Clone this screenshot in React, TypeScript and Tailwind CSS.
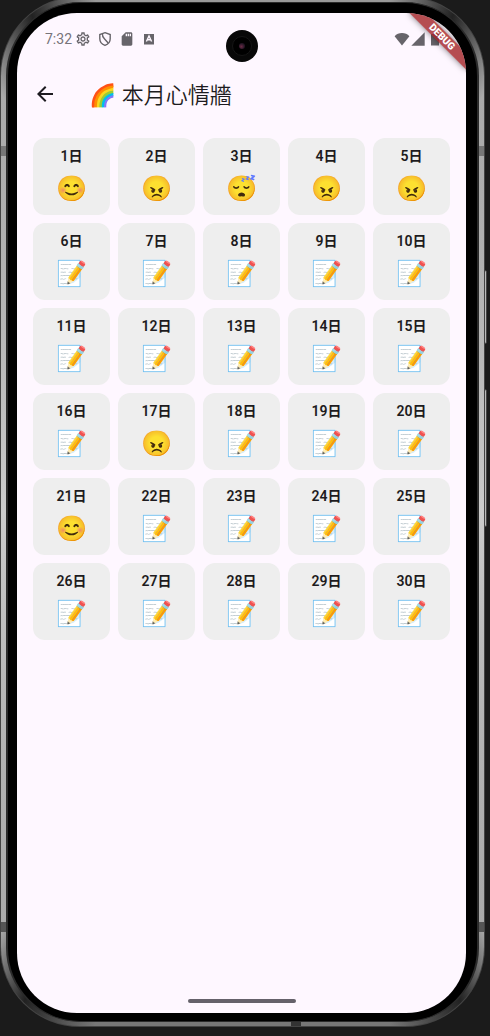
import React from "react";
import { MdArrowBack, MdOutlineSettings, MdSdCard, MdSignalCellular4Bar } from "react-icons/md";

const moods: Record<number, string> = {
  1: "😊",
  2: "😠",
  3: "😴",
  4: "😠",
  5: "😠",
  17: "😠",
  21: "😊",
};

const days = Array.from({ length: 30 }, (_, i) => i + 1);

function StatusBar() {
  return (
    <div className="relative flex h-[53px] items-center justify-between pr-[26px] pb-0.5 pl-7 text-[#67646a]">
      <div className="flex items-center">
        <span className="w-[30px] text-sm text-[#77747a]">7:32</span>
        <div className="flex items-center gap-1.5">
          <MdOutlineSettings className="size-4" />
          <svg viewBox="0 0 16 16" className="size-4" fill="none" stroke="currentColor" strokeWidth="1.4">
            <path d="M8 1.700 13.200 3.500v4.200c0 3.200-2.200 5.600-5.200 6.700-3-1.100-5.200-3.500-5.200-6.700V3.500z" />
            <path d="M5.400 2.800c-.2 2.400.4 3.700 2.200 5.300l3.600 3.800" />
          </svg>
          <MdSdCard className="size-4" />
          <svg viewBox="0 0 16 16" className="size-4">
            <path fill="currentColor" d="M3 3h10v10.500H3z" />
            <path d="M5.400 10.500 8 5l2.600 5.500M6.500 8.800h3" fill="none" stroke="#fef7ff" strokeWidth="1.400" />
          </svg>
        </div>
      </div>
      <div className="flex items-center">
        <svg viewBox="0 0 16 14" className="h-3.5 w-4" fill="currentColor">
          <path d="M8 13.500.600 4.200C2.500 2.200 5 1 8 1s5.500 1.200 7.400 3.200z" />
        </svg>
        <MdSignalCellular4Bar className="size-4" />
        <svg viewBox="0 0 10 14" className="ml-1 h-3.5 w-2.5" fill="currentColor">
          <path d="M1 2h2V.800h4V2h2v11.500H1z" />
        </svg>
      </div>
      <div className="absolute top-[17px] left-1/2 flex size-8 -translate-x-1/2 items-center justify-center rounded-full bg-[#080808]">
        <div className="flex size-5 items-center justify-center rounded-full border border-[#161616] bg-black">
          <div className="size-1.5 rounded-full bg-[radial-gradient(circle_at_40%_60%,#6b2b45,#251526_60%,#101010)]" />
        </div>
      </div>
    </div>
  );
}

export default function App() {
  return (
    <div className="relative flex min-h-screen flex-col overflow-hidden bg-[#1b1b1b] pr-[5px] pb-[9px] font-[Roboto,'Noto_Sans_CJK_TC','Noto_Color_Emoji',sans-serif]">
      <div className="absolute top-[270px] right-[3px] h-[74px] w-1 rounded-r-xs border border-[#444] bg-[#bbb]" />
      <div className="absolute top-[389px] right-[3px] h-[138px] w-1 rounded-r-xs border border-[#444] bg-[#bbb]" />
      <div className="relative -mt-1 flex flex-1 flex-col rounded-[80px] bg-[#444] p-px">
        <div className="relative flex flex-1 flex-col rounded-[79px] bg-[conic-gradient(from_0deg,#999_0deg,#999_16deg,#222_23deg,#aaa_30deg,#ccc_90deg,#aaa_150deg,#222_156deg,#777_164deg,#777_196deg,#222_204deg,#aaa_210deg,#ccc_270deg,#aaa_330deg,#222_337deg,#999_344deg,#999_360deg)] px-[5px] pt-[5px] pb-1">
          <div className="absolute top-[149px] left-0 h-2.5 w-1.5 bg-[#777]" />
          <div className="absolute top-[149px] right-0 h-2.5 w-1.5 bg-[#777]" />
          <div className="absolute bottom-[94px] left-0 h-2.5 w-1.5 bg-[#555]" />
          <div className="absolute right-0 bottom-[94px] h-2.5 w-1.5 bg-[#555]" />
          <div className="absolute right-[183px] bottom-0 h-1 w-2.5 bg-[#333]" />
          <div className="relative flex flex-1 flex-col rounded-[74px] border-x-2 border-y border-[#2b2b2b] bg-black pt-2.5 pr-[11px] pb-[8px] pl-[9px]">
            <main className="relative flex flex-1 flex-col overflow-hidden rounded-[60px] bg-[#fef7ff] text-[#1d1b20]">
              <StatusBar />
              <header className="flex h-14 items-center gap-8 pl-4">
                <button type="button" aria-label="返回" className="flex size-6 items-center justify-center">
                  <MdArrowBack className="size-6" />
                </button>
                <h1 className="pt-1 text-[22px] leading-7 font-[350]">🌈 本月心情牆</h1>
              </header>
              <ul className="grid grid-cols-5 gap-2 px-4 pt-4">
                {days.map((day) => (
                  <li key={day} className="flex aspect-square flex-col items-center gap-2 rounded-xl bg-[#eeeeee] pt-2">
                    <span className="text-sm leading-5 font-semibold">{day}日</span>
                    <span className="text-[25px] leading-[30px]">{moods[day] ?? "📝"}</span>
                  </li>
                ))}
              </ul>
              <div className="mx-auto mt-auto mb-2.5 h-1 w-[108px] rounded-full bg-[#65616a]" />
              <div className="absolute -top-10 -right-10 flex h-20 w-20 rotate-45 items-start justify-center">
                <div className="mt-[68px] h-3 w-20 shrink-0 bg-[#a32225]/80 text-center text-[10px] leading-3 font-black text-white shadow-[0_0_6px_rgba(0,0,0,0.5)]">
                  DEBUG
                </div>
              </div>
            </main>
          </div>
        </div>
      </div>
    </div>
  );
}
